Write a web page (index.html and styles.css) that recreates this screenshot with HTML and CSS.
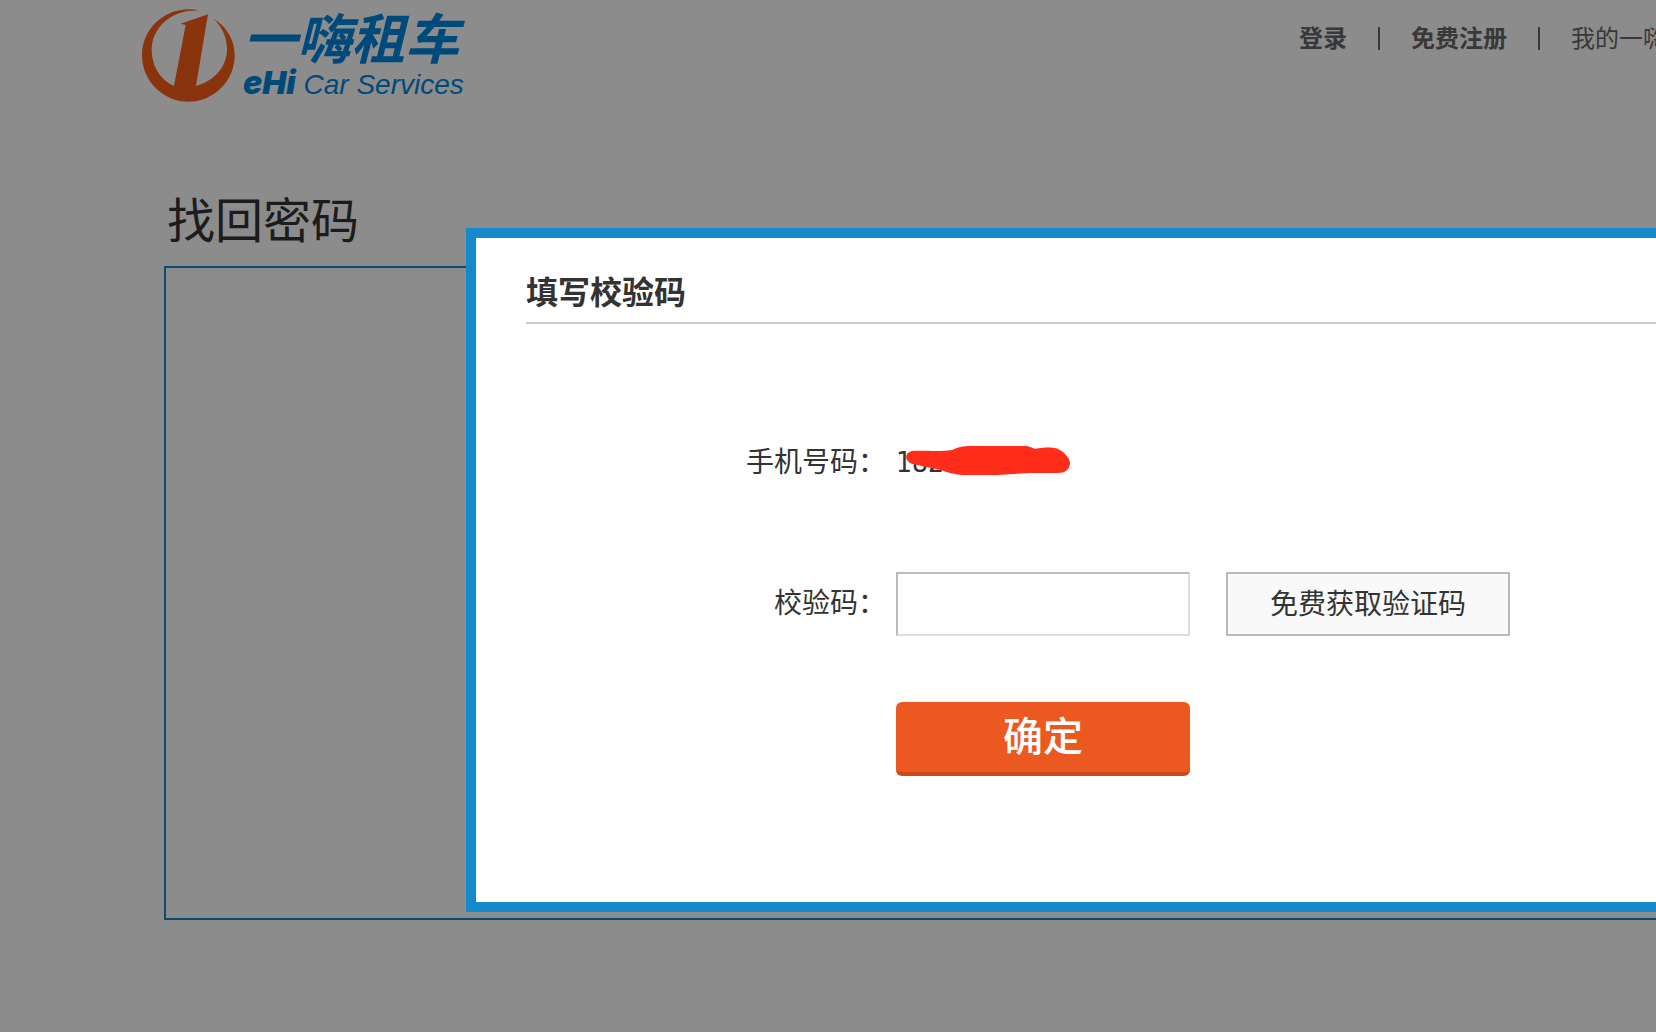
FILE: index.html
```html
<!DOCTYPE html>
<html lang="zh-CN">
<head>
<meta charset="utf-8">
<meta name="viewport" content="width=device-width, initial-scale=1">
<title>找回密码 - 一嗨租车</title>
<link rel="stylesheet" href="styles.css">
</head>
<body>
<div class="page">
  <header class="header">
    <a class="logo" href="#">
      <svg class="logo-mark" viewBox="36 28 279 279" aria-hidden="true">
        <path d="M210 33C120 12 36 78 36 167A139 139 0 0 0 314 167C314 120 290 82 250 56C278 84 291 115 291 149C291 199 256 243 198 259L234 44L152 72L167 76L132 258C94 243 65 201 65 150C65 86 124 26 210 33z"/>
      </svg>
      <span class="logo-words">
        <span class="logo-cn">一嗨租车</span>
        <span class="logo-en"><b class="logo-ehi">eHi</b> Car Services</span>
      </span>
    </a>
    <nav class="nav">
      <a class="nav-strong" href="#">登录</a>
      <span class="nav-bar"></span>
      <a class="nav-strong" href="#">免费注册</a>
      <span class="nav-bar"></span>
      <a href="#">我的一嗨</a>
    </nav>
  </header>
  <main class="main">
    <h1 class="title">找回密码</h1>
    <section class="panel"></section>
  </main>
</div>
<div class="overlay"></div>
<div class="dialog" role="dialog" aria-labelledby="dialog-title">
  <h2 class="dialog-title" id="dialog-title">填写校验码</h2>
  <form class="form">
    <div class="row">
      <span class="label">手机号码：</span>
      <span class="phone">182
        <svg class="scribble" viewBox="0 0 164 30" aria-hidden="true">
          <path d="M6 5C16 4 34 6 46 4C54 0 60 0 66 0H118C124 0 126 2 129 3C138 1 148 1 152 3C160 7 164 13 164 18C163 24 159 27 152 27L124 27L91 29L56 29C44 28 36 24 30 23C20 21 12 19 7 18C-2 15-2 7 6 5z"/>
        </svg>
      </span>
    </div>
    <div class="row row-code">
      <label class="label" for="code">校验码：</label>
      <input class="input" id="code" type="text">
      <button class="get-code" type="button">免费获取验证码</button>
    </div>
    <div class="row row-submit">
      <button class="submit" type="submit">确定</button>
    </div>
  </form>
</div>
</body>
</html>
```
FILE: styles.css
```css
* { box-sizing: border-box; }

html, body { height: 100%; }

body {
  position: relative;
  margin: 0;
  overflow: hidden;
  background: #fff;
  color: #333;
  font-family: "Liberation Sans", "Noto Sans CJK SC", sans-serif;
}

a { color: inherit; text-decoration: none; }

/* Page header */
.header {
  display: flex;
  justify-content: space-between;
  height: 190px;
  padding: 9px 0 0 142px;
}

.logo {
  display: flex;
  align-items: flex-start;
  gap: 8px;
  color: #0088e0;
}

.logo-mark { width: 93px; height: 93px; fill: #fb5f1a; }

.logo-words {
  display: flex;
  flex-direction: column;
  font-style: italic;
  white-space: nowrap;
}

.logo-cn {
  font-size: 54px;
  font-weight: 700;
  line-height: 62px;
}

.logo-en { font-size: 28px; line-height: 24px; }

.logo-ehi {
  font-family: Inter, "Liberation Sans", sans-serif;
  font-size: 32px;
  font-weight: 900;
}

.nav {
  display: flex;
  align-items: center;
  gap: 31px;
  width: 357px;
  height: 54px;
  font-size: 24px;
  white-space: nowrap;
  color: #666;
}

.nav a { flex: none; }
.nav-strong { font-weight: 700; }
.nav-bar { flex: none; width: 2px; height: 23px; margin-top: 4px; background: #666; }

/* Page body */
.main { padding-left: 164px; }

.title {
  margin: 0;
  padding: 0 0 12px 3px;
  font-size: 48px;
  font-weight: 400;
  line-height: 64px;
}

.panel {
  height: 654px;
  border: 2px solid #1489cc;
  border-right: 0;
}

.overlay {
  position: absolute;
  inset: 0;
  background: rgba(0, 0, 0, 0.45);
}

/* Verification dialog */
.dialog {
  position: absolute;
  top: 228px;
  right: 0;
  left: 466px;
  padding: 31px 0 126px 50px;
  border: 10px solid #1489cc;
  border-right: 0;
  background: #fff;
}

.dialog-title {
  margin: 0;
  padding-bottom: 5px;
  border-bottom: 2px solid #ccc;
  font-size: 32px;
  font-weight: 700;
  line-height: 48px;
}

.form { padding-top: 119px; font-size: 28px; }

.row { display: flex; align-items: center; line-height: 40px; }
.row-code { padding-top: 89px; }
.row-submit { padding: 66px 0 0 370px; }

.label { width: 360px; margin-right: 10px; text-align: right; }

.phone { position: relative; font-family: "DejaVu Sans Condensed", "DejaVu Sans", sans-serif; }

.scribble {
  position: absolute;
  top: 3px;
  left: 10px;
  width: 164px;
  height: 30px;
  fill: #ff2d1a;
}

.input {
  width: 294px;
  height: 64px;
  padding: 0 12px;
  border: 2px solid;
  border-color: #bbb #ddd #ddd #bbb;
  background: #fff;
  font: inherit;
}

.get-code {
  width: 284px;
  height: 64px;
  margin-left: 36px;
  padding: 2px 0 0;
  border: 2px solid #bbb;
  background: #f9f9f9;
  color: #333;
  font: inherit;
}

.submit {
  width: 294px;
  height: 74px;
  padding: 0 0 6px;
  border: 0;
  border-bottom: 4px solid #c94a17;
  border-radius: 6px;
  background: #eb5920;
  color: #fff;
  font-family: inherit;
  font-size: 40px;
  font-weight: 500;
}
```
